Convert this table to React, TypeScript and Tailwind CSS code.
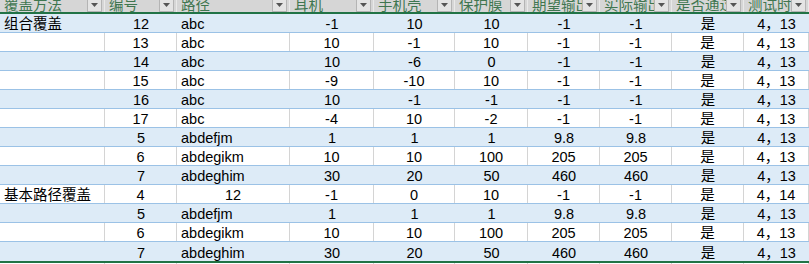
const cols = "grid grid-cols-[105px_72px_113px_84px_81px_73px_72px_72px_72px_65px]"

const headers = ["覆盖方法", "编号", "路径", "耳机", "手机壳", "保护膜", "期望输出", "实际输出", "是否通过", "测试时间"]

type Row = [string, string, string, string, string, string, string, string, string, string]

const rows: Row[] = [
  ["组合覆盖", "12", "abc", "-1", "10", "10", "-1", "-1", "是", "4，13"],
  ["", "13", "abc", "10", "-1", "10", "-1", "-1", "是", "4，13"],
  ["", "14", "abc", "10", "-6", "0", "-1", "-1", "是", "4，13"],
  ["", "15", "abc", "-9", "-10", "10", "-1", "-1", "是", "4，13"],
  ["", "16", "abc", "10", "-1", "-1", "-1", "-1", "是", "4，13"],
  ["", "17", "abc", "-4", "10", "-2", "-1", "-1", "是", "4，13"],
  ["", "5", "abdefjm", "1", "1", "1", "9.8", "9.8", "是", "4，13"],
  ["", "6", "abdegikm", "10", "10", "100", "205", "205", "是", "4，13"],
  ["", "7", "abdeghim", "30", "20", "50", "460", "460", "是", "4，13"],
  ["基本路径覆盖", "4", "12", "-1", "0", "10", "-1", "-1", "是", "4，14"],
  ["", "5", "abdefjm", "1", "1", "1", "9.8", "9.8", "是", "4，13"],
  ["", "6", "abdegikm", "10", "10", "100", "205", "205", "是", "4，13"],
  ["", "7", "abdeghim", "30", "20", "50", "460", "460", "是", "4，13"],
]

function Dropdown() {
  return (
    <div className="mr-[2px] flex h-full w-[15px] shrink-0 justify-center border border-t-0 border-[#b4b4b4] bg-[#e4e4e4] pt-[3px]">
      <svg width="7" height="4" viewBox="0 0 7 4">
        <path d="M0 0h7L3.5 4z" fill="#555" />
      </svg>
    </div>
  )
}

export default function App() {
  return (
    <div
      className="h-[264px] w-[809px] overflow-hidden bg-white text-[14.5px] text-black"
      style={{ fontFamily: '"Liberation Sans", "Noto Sans CJK SC", sans-serif' }}
    >
      {/* header, scrolled so only its bottom shows */}
      <div className={`${cols} h-[12px] bg-[#d6d6d6]`}>
        {headers.map((h) => (
          <div key={h} className="flex h-full items-end overflow-hidden border-r border-[#e9e9e9]">
            <span className="min-w-0 flex-1 overflow-hidden whitespace-nowrap pl-[4px] leading-[14px] text-[#3f7650]">
              {h}
            </span>
            <Dropdown />
          </div>
        ))}
      </div>
      <div className="h-[2px] bg-[#217346]" />

      {rows.map((r, i) => {
        const blue = i % 2 === 0
        const last = i === rows.length - 1
        return (
          <div
            key={i}
            className={`${cols} ${last ? "h-[19px]" : "h-[19px] border-b border-[#9bc2e6]"} ${blue ? "bg-[#ddebf7]" : "bg-white"}`}
          >
            {r.map((c, j) => {
              const left = j === 0 || (j === 2 && c !== "12")
              return (
                <div
                  key={j}
                  className={`flex items-end whitespace-nowrap leading-[16px] ${left ? "justify-start pl-[4px]" : "justify-center"} ${blue ? "" : "border-r border-[#d4d4d4]"} ${j === 2 && left ? "pl-[3px]" : ""}`}
                >
                  {c}
                </div>
              )
            })}
          </div>
        )
      })}
      <div className="h-[2px] bg-[#217346]" />
      <div className={`${cols} h-[4px]`}>
        {headers.map((h) => (
          <div key={h} className="border-r border-[#d4d4d4]" />
        ))}
      </div>
    </div>
  )
}
